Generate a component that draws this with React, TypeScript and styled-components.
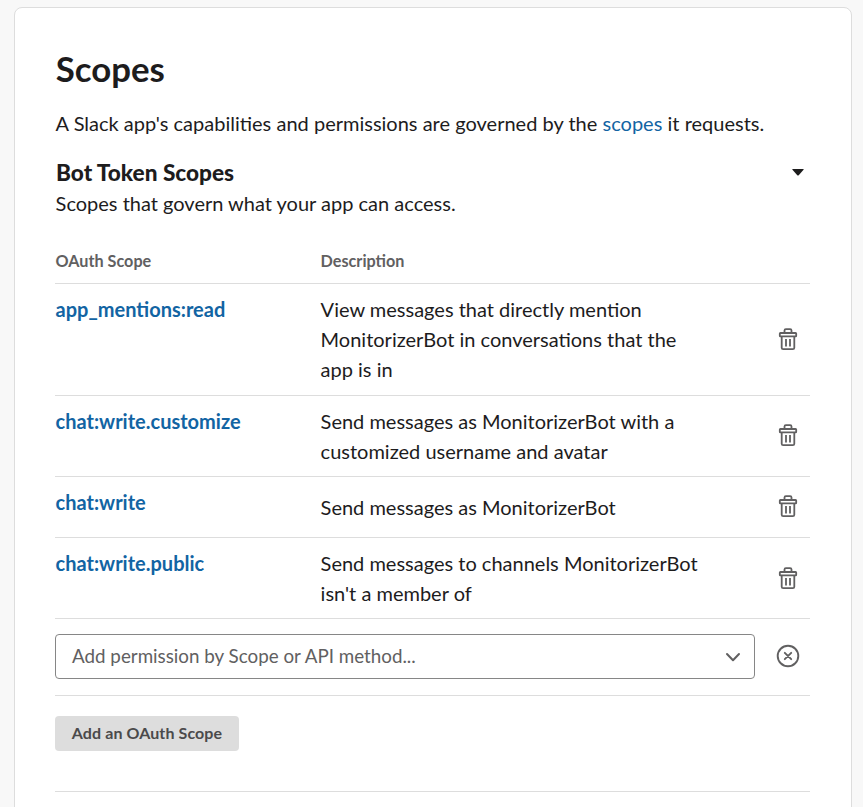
import React from 'react';
import styled, { createGlobalStyle } from 'styled-components';

const Global = createGlobalStyle`
  * { box-sizing: border-box; }
  html, body { margin: 0; height: 807px; overflow: hidden; background: #f8f8f8; }
  body { font-family: Lato, "Liberation Sans", sans-serif; color: #1d1c1d; font-size: 20px; line-height: 30px; }
`;
const Page = styled.main`
  height: 807px; padding: 7px 11px 0 14px; overflow: hidden;
`;
const Card = styled.section`
  height: 830px; padding: 39px 41px 0 40px; background: #fff;
  border: 1px solid #dddddd; border-radius: 8px;
`;
const Title = styled.h1`
  margin: 0; padding-left: 0.7px; font-size: 34.8px; line-height: 44px; font-weight: 700;
`;
const Text = styled.p`
  margin: 0; padding-left: 0.6px; white-space: nowrap;
`;
const Intro = styled(Text)`
  margin-top: 17px; word-spacing: 0.06px;
`;
const Link = styled.a`
  color: #1264a3; text-decoration: none;
`;
const SectionHead = styled.div`
  display: flex; justify-content: space-between; align-items: flex-start;
  margin-top: 20px; height: 30px; padding-right: 6px;
`;
const Caret = styled.svg`
  margin-top: 10px;
`;
const Subtitle = styled.h2`
  margin: 0; padding-left: 1px; font-size: 22.6px; line-height: 30px; font-weight: 900;
`;
const Row = styled.div<{ $height: number }>`
  display: grid; grid-template-columns: 265px 400px 1fr;
  height: ${p => p.$height}px; padding-top: 10px; border-bottom: 1px solid #dddddd;
`;
const HeaderRow = styled(Row)`
  margin-top: 21px; padding-top: 7px; color: #616061; font-size: 16.2px; font-weight: 700;
  > span { padding-left: 0.6px; }
`;
const Name = styled.a`
  padding-left: 0.6px; color: #1264a3; font-weight: 700;
`;
const Description = styled.div<{ $shift?: number }>`
  padding: ${p => p.$shift ?? 0}px 0 0 0.6px; white-space: pre;
`;
const Action = styled.div<{ $bottom?: number }>`
  display: flex; justify-content: flex-end; align-items: center;
  padding: 0 12px ${p => p.$bottom ?? 11}px 0; color: #616061;
`;
const AddRow = styled.div`
  display: flex; align-items: flex-start; justify-content: space-between;
  height: 77px; padding: 15px 10px 0 0; border-bottom: 1px solid #dddddd;
`;
const Select = styled.div`
  display: flex; align-items: center; justify-content: space-between;
  width: 700px; height: 45px; padding: 0 13px 0 16px;
  border: 1px solid #868686; border-radius: 4px; color: #616061;
`;
const Placeholder = styled.span`
  font-size: 18.8px; line-height: 28px; padding-bottom: 1px;
`;
const Clear = styled.div`
  display: flex; align-items: center; height: 44px;
`;
const Footer = styled.div`
  display: flex; align-items: flex-start;
  height: 96px; padding-top: 20px; border-bottom: 1px solid #dddddd;
`;
const Button = styled.button`
  width: 184px; height: 35px; padding: 0 0 2px; border: 0; border-radius: 4px;
  background: #dddddd; color: #4b4a4b; font: 700 16px Lato, sans-serif; letter-spacing: 0.1px;
`;

const Trash = () => (
  <svg width="20" height="24" viewBox="0 0 20 24" fill="none" stroke="currentColor" strokeWidth="1.8" strokeLinejoin="round">
    <path d="M6.5 6V3.6Q6.5 2.2 7.9 2.2H12.1Q13.5 2.2 13.5 3.6V6" />
    <rect x="1.8" y="6" width="16.4" height="3.4" rx="0.6" />
    <path d="M3.7 9.6V20.8Q3.7 22.2 5.2 22.2H14.8Q16.3 22.2 16.3 20.8V9.6M8 12V19.5M12 12V19.5" />
  </svg>
);

const scopes = [
  { name: 'app_mentions:read', text: 'View messages that directly mention\nMonitorizerBot in conversations that the\napp is in', height: 112 },
  { name: 'chat:write.customize', text: 'Send messages as MonitorizerBot with a\ncustomized username and avatar', height: 81, bottom: 12 },
  { name: 'chat:write', text: 'Send messages as MonitorizerBot', height: 61, shift: 5, bottom: 12 },
  { name: 'chat:write.public', text: "Send messages to channels MonitorizerBot\nisn't a member of", height: 81 },
];

export default function App() {
  return (
    <>
      <Global />
      <Page>
        <Card>
          <Title>Scopes</Title>
          <Intro>A Slack app's capabilities and permissions are governed by the <Link>scopes</Link> it requests.</Intro>
          <SectionHead>
            <Subtitle>Bot Token Scopes</Subtitle>
            <Caret width="12" height="8" viewBox="0 0 12 8"><path d="M0.8 1H11.2Q12.2 1 11.5 1.8L6.7 7.2Q6 7.9 5.3 7.2L0.5 1.8Q-0.2 1 0.8 1Z" fill="#1d1c1d" /></Caret>
          </SectionHead>
          <Text>Scopes that govern what your app can access.</Text>
          <HeaderRow $height={45}><span>OAuth Scope</span><span>Description</span></HeaderRow>
          {scopes.map(s => (
            <Row key={s.name} $height={s.height}>
              <Name>{s.name}</Name>
              <Description $shift={s.shift}>{s.text}</Description>
              <Action $bottom={s.bottom}><Trash /></Action>
            </Row>
          ))}
          <AddRow>
            <Select>
              <Placeholder>Add permission by Scope or API method...</Placeholder>
              <svg width="16" height="10" viewBox="0 0 16 10" fill="none" stroke="#616061" strokeWidth="2" strokeLinecap="round" strokeLinejoin="round"><path d="M2 2L8 8.3L14 2" /></svg>
            </Select>
            <Clear>
              <svg width="24" height="24" viewBox="0 0 24 24" fill="none" stroke="#616061" strokeWidth="1.9" strokeLinecap="round">
                <circle cx="12" cy="12" r="10.3" /><path d="M8.8 8.8L15.2 15.2M15.2 8.8L8.8 15.2" />
              </svg>
            </Clear>
          </AddRow>
          <Footer><Button>Add an OAuth Scope</Button></Footer>
        </Card>
      </Page>
    </>
  );
}
